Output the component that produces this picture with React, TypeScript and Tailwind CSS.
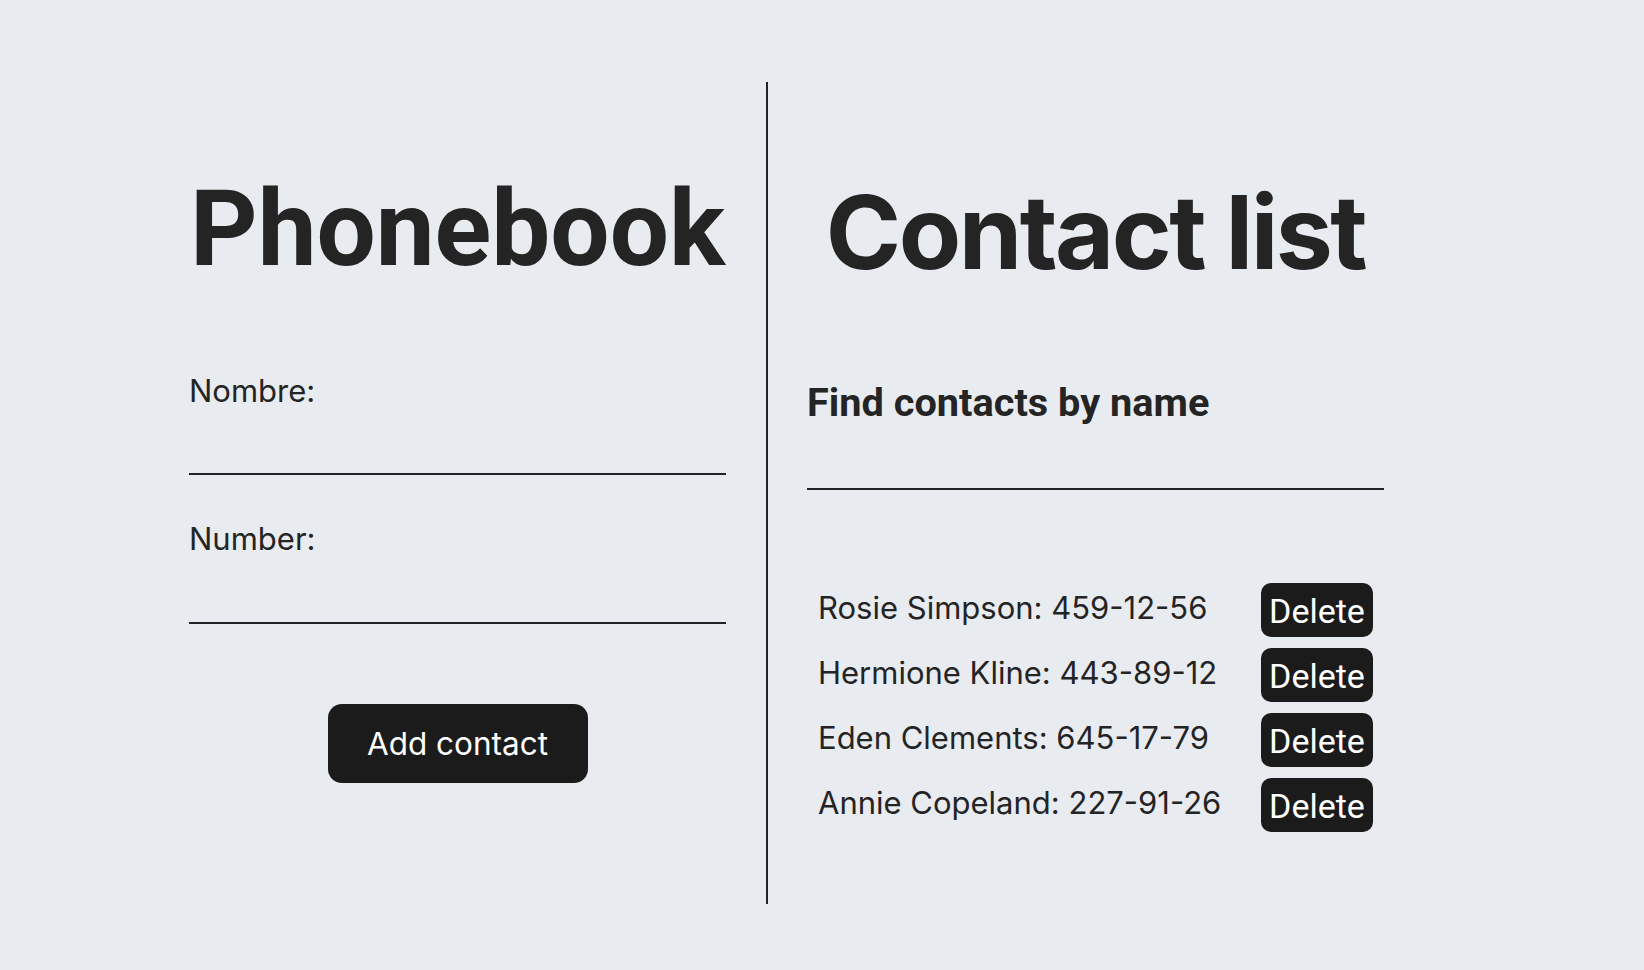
import React, { useState } from 'react';

interface Contact {
  id: string;
  name: string;
  number: string;
}

const initialContacts: Contact[] = [
  { id: 'id-1', name: 'Rosie Simpson', number: '459-12-56' },
  { id: 'id-2', name: 'Hermione Kline', number: '443-89-12' },
  { id: 'id-3', name: 'Eden Clements', number: '645-17-79' },
  { id: 'id-4', name: 'Annie Copeland', number: '227-91-26' },
];

const ContactForm: React.FC<{ onAdd: (name: string, number: string) => void }> = ({ onAdd }) => {
  const [name, setName] = useState('');
  const [number, setNumber] = useState('');

  const handleSubmit = (e: React.FormEvent) => {
    e.preventDefault();
    if (!name.trim() || !number.trim()) return;
    onAdd(name, number);
    setName('');
    setNumber('');
  };

  return (
    <form onSubmit={handleSubmit} className="flex flex-col mt-[93px]">
      <label className="flex flex-col">
        <span className="font-['Inter',sans-serif] text-[31px] leading-none">Nombre:</span>
        <input
          type="text"
          value={name}
          onChange={(e) => setName(e.target.value)}
          className="mt-[25px] h-[44px] bg-transparent border-b-2 border-[#222] outline-none font-['Inter',sans-serif] text-[26px]"
        />
      </label>
      <label className="flex flex-col mt-[48px]">
        <span className="font-['Inter',sans-serif] text-[31px] leading-none">Number:</span>
        <input
          type="tel"
          value={number}
          onChange={(e) => setNumber(e.target.value)}
          className="mt-[26px] h-[44px] bg-transparent border-b-2 border-[#222] outline-none font-['Inter',sans-serif] text-[26px]"
        />
      </label>
      <button
        type="submit"
        className="self-center mt-[80px] w-[260px] h-[79px] rounded-[14px] bg-[#1b1b1b] text-white font-['Inter',sans-serif] text-[31.5px] leading-none"
      >
        Add contact
      </button>
    </form>
  );
};

const ContactList: React.FC<{ contacts: Contact[]; onDelete: (id: string) => void }> = ({ contacts, onDelete }) => (
  <ul className="flex flex-col gap-[11px] mt-[93px] px-[11px]">
    {contacts.map((c) => (
      <li key={c.id} className="flex items-center justify-between">
        <span className="pb-[4px] font-['Inter',sans-serif] text-[31px] leading-none">
          {c.name}: {c.number}
        </span>
        <button
          onClick={() => onDelete(c.id)}
          className="w-[112px] h-[54px] pt-[2px] rounded-[10px] bg-[#1b1b1b] text-white font-['Roboto',sans-serif] text-[34px] leading-none"
        >
          Delete
        </button>
      </li>
    ))}
  </ul>
);

export default function App() {
  const [contacts, setContacts] = useState<Contact[]>(initialContacts);
  const [filter, setFilter] = useState('');

  const addContact = (name: string, number: string) => {
    setContacts((prev) => [...prev, { id: `id-${Date.now()}`, name, number }]);
  };

  const visible = contacts.filter((c) => c.name.toLowerCase().includes(filter.toLowerCase()));

  return (
    <div className="min-h-screen bg-[#e8ebf0] text-[#242424]">
      <div className="flex pt-[82px] pl-[189px]">
        <section className="w-[537px] flex flex-col">
          <h1 className="mt-[95px] text-center font-['Roboto',sans-serif] font-bold text-[105px] leading-none">
            Phonebook
          </h1>
          <ContactForm onAdd={addContact} />
        </section>
        <div className="ml-[40px] w-[2px] h-[822px] bg-[#222]" />
        <section className="ml-[39px] w-[577px] flex flex-col">
          <h2 className="mt-[99px] text-center font-['Inter',sans-serif] font-bold text-[102px] tracking-[-0.025em] leading-none">
            Contact list
          </h2>
          <h3 className="mt-[100px] font-['Roboto',sans-serif] font-bold text-[39.7px] leading-none">
            Find contacts by name
          </h3>
          <input
            type="text"
            value={filter}
            onChange={(e) => setFilter(e.target.value)}
            className="mt-[23px] h-[44px] bg-transparent border-b-2 border-[#222] outline-none font-['Inter',sans-serif] text-[26px]"
          />
          <ContactList contacts={visible} onDelete={(id) => setContacts((prev) => prev.filter((c) => c.id !== id))} />
        </section>
      </div>
    </div>
  );
}
